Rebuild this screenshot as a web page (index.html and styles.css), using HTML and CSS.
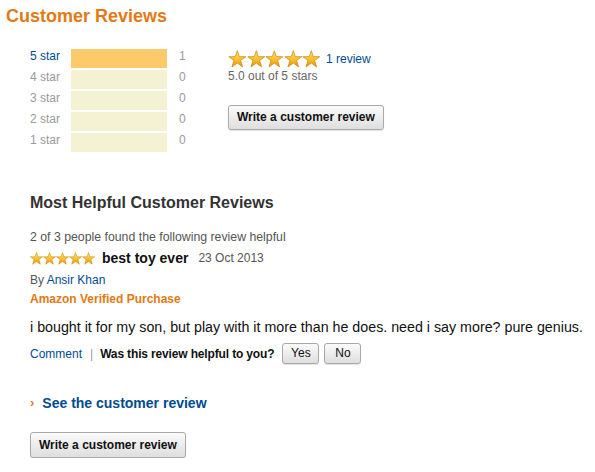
FILE: index.html
```html
<!DOCTYPE html>
<html>
<head>
<meta charset="utf-8">
<link rel="stylesheet" href="styles.css">
</head>
<body>
<svg class="defs" width="0" height="0" aria-hidden="true">
  <defs>
    <linearGradient id="gold" x1="0" y1="0" x2="0" y2="1">
      <stop offset="0" stop-color="#ffe27a"/>
      <stop offset="0.55" stop-color="#f8bf2a"/>
      <stop offset="1" stop-color="#e8940c"/>
    </linearGradient>
    <symbol id="star" viewBox="0 0 100 100">
      <polygon points="50,4 61.5,37 97,37 68.5,58.5 79.5,94 50,72.5 20.5,94 31.5,58.5 3,37 38.5,37" fill="url(#gold)" stroke="#c9850e" stroke-width="4" stroke-linejoin="round"/>
    </symbol>
  </defs>
</svg>
<div class="page">
  <h1 class="title">Customer Reviews</h1>

  <div class="summary">
    <div class="histogram">
      <span class="label active">5 star</span><div class="bar full"></div><span class="count">1</span>
      <span class="label">4 star</span><div class="bar"></div><span class="count">0</span>
      <span class="label">3 star</span><div class="bar"></div><span class="count">0</span>
      <span class="label">2 star</span><div class="bar"></div><span class="count">0</span>
      <span class="label">1 star</span><div class="bar"></div><span class="count">0</span>
    </div>
    <div class="average">
      <div class="avg-row">
        <span class="stars big">
          <svg><use href="#star"/></svg><svg><use href="#star"/></svg><svg><use href="#star"/></svg><svg><use href="#star"/></svg><svg><use href="#star"/></svg>
        </span>
        <a class="link review-count">1 review</a>
      </div>
      <div class="avg-text">5.0 out of 5 stars</div>
      <button class="btn write">Write a customer review</button>
    </div>
  </div>

  <div class="reviews">
    <h2 class="section-title">Most Helpful Customer Reviews</h2>
    <div class="helpful">2 of 3 people found the following review helpful</div>
    <div class="review-head">
      <span class="stars small">
        <svg><use href="#star"/></svg><svg><use href="#star"/></svg><svg><use href="#star"/></svg><svg><use href="#star"/></svg><svg><use href="#star"/></svg>
      </span>
      <span class="review-title">best toy ever</span>
      <span class="date">23 Oct 2013</span>
    </div>
    <div class="byline">By <a class="link">Ansir Khan</a></div>
    <div class="verified">Amazon Verified Purchase</div>
    <p class="body">i bought it for my son, but play with it more than he does. need i say more? pure genius.</p>
    <div class="actions">
      <a class="link">Comment</a>
      <span class="sep">|</span>
      <span class="question">Was this review helpful to you?</span>
      <button class="btn small-btn">Yes</button>
      <button class="btn small-btn">No</button>
    </div>
    <div class="see-all"><span class="chev">›</span><a class="link strong">See the customer review</a></div>
    <button class="btn write bottom">Write a customer review</button>
  </div>
</div>
</body>
</html>
```
FILE: styles.css
```css
html, body {
  margin: 0;
  padding: 0;
  background: #fff;
}
body {
  font-family: "Liberation Sans", Arial, sans-serif;
  color: #111;
}
.defs {
  display: block;
  width: 0;
  height: 0;
  overflow: hidden;
}
.page {
  padding: 5px 6px 0 6px;
}
.title {
  margin: 0;
  font-size: 18px;
  line-height: 22px;
  font-weight: bold;
  color: #e47911;
}
.link {
  color: #004b91;
  text-decoration: none;
}
.summary {
  display: flex;
  margin-top: 22px;
  padding-left: 24px;
}
.histogram {
  display: grid;
  grid-template-columns: 41px 96px 61px;
  grid-auto-rows: 19px;
  row-gap: 2px;
  font-size: 12px;
  line-height: 15px;
}
.label {
  color: #999;
}
.label.active {
  color: #004b91;
}
.bar {
  background: #f4f2d2;
}
.bar.full {
  background: #fdca69;
}
.count {
  color: #999;
  padding-left: 12px;
}
.average {
  display: flex;
  flex-direction: column;
  align-items: flex-start;
}
.avg-row {
  display: flex;
  align-items: center;
  height: 19px;
}
.stars {
  display: flex;
}
.stars.big svg {
  width: 18.6px;
  height: 18px;
  display: block;
}
.review-count {
  font-size: 12px;
  margin-left: 5px;
  margin-top: 1px;
}
.avg-text {
  font-size: 12px;
  line-height: 16px;
  color: #666;
  margin-top: 0;
}
.btn {
  font-family: "Liberation Sans", Arial, sans-serif;
  font-size: 12px;
  color: #111;
  border: 1px solid #a9a9a9;
  border-radius: 3px;
  background: linear-gradient(#fbfbfb, #dedede);
  box-shadow: 0 1px 1px rgba(0,0,0,0.12);
  padding: 0 8px;
  cursor: pointer;
}
.btn.write {
  font-weight: bold;
  height: 25px;
  line-height: 23px;
  margin-top: 21px;
}
.btn.write.bottom {
  height: 26px;
  margin-top: 20px;
}
.reviews {
  padding-left: 24px;
}
.section-title {
  margin: 41px 0 0 0;
  font-size: 16px;
  line-height: 20px;
  font-weight: bold;
  color: #333;
}
.helpful {
  margin-top: 16px;
  font-size: 12.3px;
  line-height: 16px;
  color: #555;
}
.review-head {
  display: flex;
  align-items: center;
  height: 20px;
  margin-top: 3px;
}
.stars.small svg {
  width: 13px;
  height: 13px;
  display: block;
}
.review-title {
  font-size: 14px;
  font-weight: bold;
  margin-left: 7px;
}
.date {
  font-size: 12px;
  color: #555;
  margin-left: 10px;
}
.byline {
  margin-top: 4px;
  font-size: 12px;
  line-height: 16px;
  color: #555;
}
.verified {
  margin-top: 3px;
  font-size: 12px;
  line-height: 16px;
  font-weight: bold;
  color: #e47911;
}
.body {
  margin: 11px 0 0 0;
  font-size: 14.25px;
  line-height: 18px;
  color: #111;
}
.actions {
  display: flex;
  align-items: center;
  margin-top: 7px;
  height: 21px;
  font-size: 12px;
}
.sep {
  color: #999;
  margin: 0 7px 0 8px;
}
.question {
  font-weight: bold;
  letter-spacing: -0.15px;
  margin-right: 8px;
}
.small-btn {
  height: 21px;
  line-height: 19px;
  min-width: 37px;
  padding: 0 7px;
  margin-right: 5px;
}
.see-all {
  margin-top: 30px;
  font-size: 14px;
  line-height: 18px;
  display: flex;
  align-items: center;
}
.chev {
  color: #e47911;
  font-weight: bold;
  font-size: 13px;
  margin-right: 8px;
}
.strong {
  font-weight: bold;
}
```
